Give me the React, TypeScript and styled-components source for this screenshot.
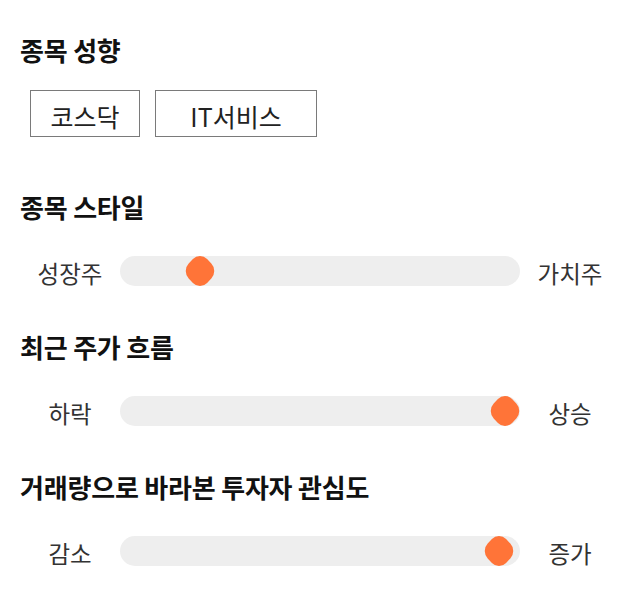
import React from "react";
import styled, { createGlobalStyle } from "styled-components";

const Global = createGlobalStyle`
  html, body { margin: 0; padding: 0; background: #fff; }
  body { font-family: "Noto Sans CJK KR", "Noto Sans", sans-serif; }
`;

const Page = styled.div`
  padding: 33px 20px 0 20px;
  width: 600px;
`;

const Section = styled.section<{ $after: number }>`
  margin-bottom: ${(p) => p.$after}px;
`;

const Heading = styled.h2<{ $gap: number }>`
  margin: 0 0 ${(p) => p.$gap}px 0;
  font-size: 26px;
  line-height: 34px;
  font-weight: 700;
  color: #111;
  letter-spacing: -0.2px;
`;

const ChipRow = styled.div`
  display: flex;
  gap: 15px;
  padding-left: 10px;
`;

const Chip = styled.button<{ $width: number }>`
  width: ${(p) => p.$width}px;
  height: 47px;
  padding: 4px 0 0 0;
  border: 1px solid #7a7a7a;
  background: #fff;
  font-family: "Noto Sans CJK KR", "Noto Sans", sans-serif;
  font-size: 25px;
  color: #222;
  display: flex;
  align-items: center;
  justify-content: center;
`;

const SliderRow = styled.div`
  display: flex;
  align-items: center;
  height: 30px;
`;

const SideLabel = styled.span`
  width: 100px;
  text-align: center;
  font-size: 23.5px;
  color: #333;
  line-height: 30px;
  padding-top: 4px;
`;

const Track = styled.div`
  position: relative;
  width: 400px;
  height: 30px;
  border-radius: 15px;
  background: #eeeeee;
`;

const Thumb = styled.div`
  position: absolute;
  top: 50%;
  width: 26px;
  height: 26px;
  border-radius: 10px;
  background: #ff7438;
  transform: translate(-50%, -50%) scaleY(1.05) rotate(45deg);
`;

function Slider({ left, right, pos }: { left: string; right: string; pos: number }) {
  return (
    <SliderRow>
      <SideLabel>{left}</SideLabel>
      <Track>
        <Thumb style={{ left: `${pos}px` }} />
      </Track>
      <SideLabel>{right}</SideLabel>
    </SliderRow>
  );
}

export default function App() {
  return (
    <>
      <Global />
      <Page>
        <Section $after={53}>
          <Heading $gap={23}>종목 성향</Heading>
          <ChipRow>
            <Chip $width={110}>코스닥</Chip>
            <Chip $width={162}>IT서비스</Chip>
          </ChipRow>
        </Section>
        <Section $after={44}>
          <Heading $gap={32}>종목 스타일</Heading>
          <Slider left="성장주" right="가치주" pos={80} />
        </Section>
        <Section $after={44}>
          <Heading $gap={32}>최근 주가 흐름</Heading>
          <Slider left="하락" right="상승" pos={385} />
        </Section>
        <Section $after={0}>
          <Heading $gap={32}>거래량으로 바라본 투자자 관심도</Heading>
          <Slider left="감소" right="증가" pos={379} />
        </Section>
      </Page>
    </>
  );
}
